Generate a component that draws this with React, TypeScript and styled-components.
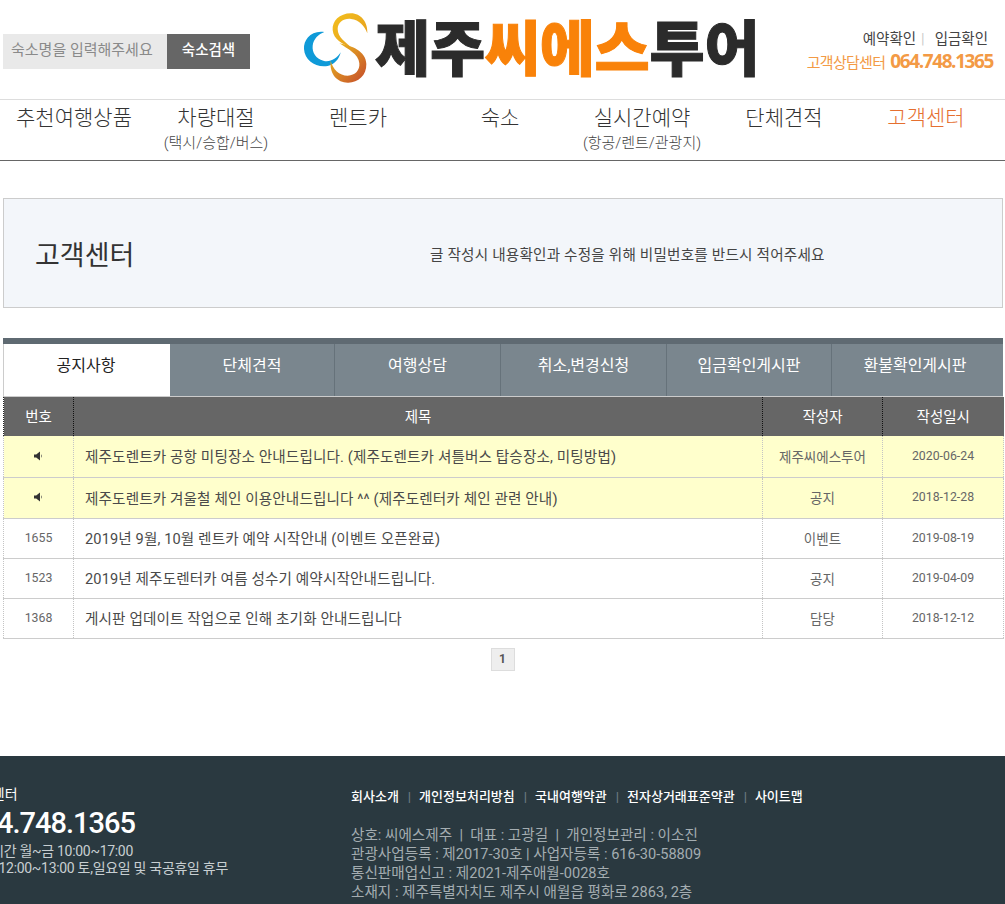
import React from "react";
import styled, { createGlobalStyle } from "styled-components";

const FONT = `Roboto, "Noto Sans CJK KR", sans-serif`;

const Global = createGlobalStyle`
  html, body { margin: 0; padding: 0; height: 904px; overflow: hidden; background: #fff; }
  body { font-family: ${FONT}; color: #333; }
  * { box-sizing: border-box; }
`;

const Page = styled.div`
  width: 1005px;
  height: 904px;
  overflow: hidden;
`;

const Header = styled.header`
  height: 100px;
  padding-left: 3px;
  display: flex;
  align-items: flex-start;
  border-bottom: 1px solid #ddd;
`;

const Search = styled.form`
  width: 247px;
  height: 35px;
  margin-top: 34px;
  display: flex;
`;

const SearchInput = styled.div`
  width: 164px;
  background: #e9e9e9;
  color: #8a8a8a;
  font-size: 15px;
  line-height: 33px;
  padding-left: 8px;
  white-space: nowrap;
`;

const SearchButton = styled.div`
  width: 83px;
  background: #666;
  color: #fff;
  font-size: 14.500px;
  font-weight: 500;
  line-height: 33px;
  text-align: center;
`;

const Logo = styled.div`
  margin-left: 46px;
  width: 462px;
  height: 90px;
  margin-top: 4px;
  display: flex;
  align-items: flex-start;
`;

const LogoMark = styled.svg`
  width: 80px;
  height: 85px;
  flex: none;
`;

const LogoText = styled.div`
  margin-left: -1px;
  margin-top: 1px;
  font-family: "Noto Sans CJK KR", sans-serif;
  font-size: 60px;
  font-weight: 900;
  line-height: 80px;
  letter-spacing: -0.3px;
  color: #2b2b2b;
  white-space: nowrap;
  -webkit-text-stroke: 1px currentColor;
`;

const LogoAccent = styled.span`
  color: #f98209;
`;

const Contact = styled.div`
  margin-left: 46px;
  width: 189px;
  padding-top: 30px;
  text-align: right;
`;

const ContactLinks = styled.div`
  font-size: 14.500px;
  line-height: 20px;
  color: #444;
  padding-right: 5px;
`;

const ContactBar = styled.span`
  color: #ccc;
  margin: 0 10px 0 5px;
`;

const Phone = styled.div`
  margin-top: 0;
  color: #f39a45;
  font-size: 15px;
  line-height: 22px;
  letter-spacing: -0.7px;
  white-space: nowrap;
`;

const PhoneNumber = styled.b`
  font-family: "Open Sans", sans-serif;
  font-size: 19px;
  font-weight: 700;
  letter-spacing: -1.4px;
  margin-left: 5px;
`;

const Nav = styled.nav`
  height: 61px;
  padding-left: 3px;
  display: grid;
  grid-template-columns: repeat(7, 142px);
  border-bottom: 1px solid #666;
`;

const NavItem = styled.a<{ $active?: boolean }>`
  text-align: center;
  padding-top: 2px;
  font-size: 21px;
  font-weight: 300;
  line-height: 32px;
  color: ${(p) => (p.$active ? "#e56f30" : "#333")};
`;

const NavSub = styled.div`
  font-size: 15px;
  line-height: 16px;
  margin-top: 1px;
  color: #444;
`;

const Banner = styled.section`
  margin: 37px 2px 0 3px;
  height: 110px;
  background: #f3f6fa;
  border: 1px solid #ccc;
  display: flex;
  align-items: center;
`;

const BannerTitle = styled.h2`
  margin: 0 0 0 31px;
  width: 395px;
  font-size: 27px;
  font-weight: 400;
  color: #333;
`;

const BannerNote = styled.p`
  margin: 0;
  font-size: 14.600px;
  letter-spacing: 0.2px;
  color: #444;
`;

const Tabs = styled.div`
  margin: 30px 2px 0 3px;
  border-top: 6px solid #5f6a72;
  height: 59px;
  display: grid;
  grid-template-columns: 167px 165px 166px 166px 165px 171px;
  background: #7a868e;
  border-bottom: 1px solid #ccc;
`;

const Tab = styled.a<{ $active?: boolean }>`
  height: 52px;
  text-align: center;
  font-size: 16px;
  line-height: 43px;
  color: ${(p) => (p.$active ? "#222" : "#fff")};
  background: ${(p) => (p.$active ? "#fff" : "#7a868e")};
  border-right: 1px solid #66727a;
  &:first-child { border-left: 1px solid #ccc; border-right: 0; padding-right: 2px; }
  &:last-child { border-right: 0; padding-right: 5px; }
`;

const Board = styled.table`
  width: 1000px;
  margin-left: 3px;
  border-collapse: collapse;
  table-layout: fixed;
`;

const HeadCell = styled.th<{ $w: number }>`
  width: ${(p) => p.$w}px;
  height: 39px;
  padding: 0 0 2px;
  background: #666;
  color: #fff;
  font-size: 14.500px;
  font-weight: 400;
  border-left: 1px dotted #111;
  &:first-child { border-left: 1px dotted #222; }
`;

const Row = styled.tr<{ $notice?: boolean; $h: number }>`
  height: ${(p) => p.$h}px;
  background: ${(p) => (p.$notice ? "#ffffcc" : "#fff")};
  border-bottom: 1px solid #ccc;
`;

const Cell = styled.td`
  padding: 0 0 1px;
  text-align: center;
  font-size: 13.500px;
  color: #666;
  border-left: 1px dotted #c4c4c4;
  &:last-child { border-right: 1px dotted #c4c4c4; }
`;

const NumCell = styled(Cell)`
  font-size: 12.300px;
`;

const TitleCell = styled(Cell)`
  text-align: left;
  padding-left: 11px;
  font-size: 14.600px;
  letter-spacing: 0.12px;
  color: #4a4a4a;
  white-space: nowrap;
`;

const Horn = styled.svg`
  width: 12px;
  height: 12px;
  display: block;
  margin: 0 auto;
`;

const Pager = styled.div`
  margin-top: 9px;
  display: flex;
  justify-content: center;
`;

const PageNum = styled.a`
  width: 24px;
  height: 23px;
  background: #eee;
  border: 1px solid #ddd;
  font-size: 12px;
  font-weight: 700;
  line-height: 21px;
  text-align: center;
  color: #555;
`;

const Footer = styled.footer`
  margin-top: 85px;
  height: 300px;
  background: #2a3940;
  display: flex;
  padding-top: 28px;
`;

const FooterLeft = styled.div`
  width: 385px;
  margin-left: -34px;
  flex: none;
  color: #c8cfd2;
`;

const FooterHead = styled.div`
  color: #fff;
  font-size: 14px;
  line-height: 20px;
`;

const FooterPhone = styled.div`
  color: #fff;
  font-size: 29px;
  font-weight: 500;
  letter-spacing: -1px;
  line-height: 36px;
  margin: 1px 0 2px;
`;

const FooterLine = styled.div<{ $pull?: boolean }>`
  font-size: 14px;
  letter-spacing: -0.3px;
  line-height: 17px;
  white-space: nowrap;
  margin-left: ${(p) => (p.$pull ? "-21px" : "0")};
`;

const FooterGap = styled(FooterHead)`
  margin-top: 18px;
`;

const FooterRight = styled.div`
  padding-top: 4px;
`;

const FooterLinks = styled.div`
  display: flex;
  align-items: center;
  color: #fff;
  font-size: 13px;
  font-weight: 500;
  line-height: 18px;
  white-space: nowrap;
`;

const FooterSep = styled.span`
  color: #6f7c82;
  margin: 0 8px 0 9px;
`;

const Company = styled.div`
  margin-top: 20px;
  color: #a4adb1;
  font-size: 14.600px;
  line-height: 19px;
  white-space: nowrap;
`;

const rows = [
  { no: null, title: "제주도렌트카 공항 미팅장소 안내드립니다. (제주도렌트카 셔틀버스 탑승장소, 미팅방법)", by: "제주씨에스투어", date: "2020-06-24", h: 41 },
  { no: null, title: "제주도렌트카 겨울철 체인 이용안내드립니다 ^^ (제주도렌터카 체인 관련 안내)", by: "공지", date: "2018-12-28", h: 41 },
  { no: "1655", title: "2019년 9월, 10월 렌트카 예약 시작안내 (이벤트 오픈완료)", by: "이벤트", date: "2019-08-19", h: 40 },
  { no: "1523", title: "2019년 제주도렌터카 여름 성수기 예약시작안내드립니다.", by: "공지", date: "2019-04-09", h: 40 },
  { no: "1368", title: "게시판 업데이트 작업으로 인해 초기화 안내드립니다", by: "담당", date: "2018-12-12", h: 40 },
];

const navItems = [
  { t: "추천여행상품" },
  { t: "차량대절", s: "(택시/승합/버스)" },
  { t: "렌트카" },
  { t: "숙소" },
  { t: "실시간예약", s: "(항공/렌트/관광지)" },
  { t: "단체견적" },
  { t: "고객센터", active: true },
];

const tabs = ["공지사항", "단체견적", "여행상담", "취소,변경신청", "입금확인게시판", "환불확인게시판"];

export default function App() {
  return (
    <Page>
      <Global />
      <Header>
        <Search>
          <SearchInput>숙소명을 입력해주세요</SearchInput>
          <SearchButton>숙소검색</SearchButton>
        </Search>
        <Logo>
          <LogoMark viewBox="0 0 240 255">
            <defs>
              <linearGradient id="gTop" x1="0" y1="0" x2="1" y2="1">
                <stop offset="0" stopColor="#f3c01d" />
                <stop offset="1" stopColor="#e49a1f" />
              </linearGradient>
              <linearGradient id="gBot" x1="0" y1="0" x2="1" y2="1">
                <stop offset="0" stopColor="#eec21d" />
                <stop offset="1" stopColor="#c4492c" />
              </linearGradient>
            </defs>
            <path fill="#0f9ad8" d="M85 84C45 78 22 108 24 135C26 170 60 192 95 186C115 182 130 165 134 145C122 165 100 176 82 170C60 164 48 145 50 125C52 105 68 90 85 84Z" />
            <path fill="url(#gTop)" d="M214 88C216 55 195 28 165 28C130 28 108 52 110 78C112 105 140 122 165 130C150 115 125 100 125 75C125 55 145 42 165 45C190 48 205 65 214 88Z" />
            <path fill="url(#gBot)" d="M130 118C165 125 210 140 211 180C212 215 185 237 155 236C125 235 100 212 104 170C110 195 130 215 155 215C178 215 192 198 190 178C188 150 155 135 130 118Z" />
          </LogoMark>
          <LogoText>제주<LogoAccent>씨에스</LogoAccent>투어</LogoText>
        </Logo>
        <Contact>
          <ContactLinks>예약확인<ContactBar>|</ContactBar>입금확인</ContactLinks>
          <Phone>고객상담센터<PhoneNumber>064.748.1365</PhoneNumber></Phone>
        </Contact>
      </Header>
      <Nav>
        {navItems.map((n) => (
          <NavItem key={n.t} $active={n.active}>
            {n.t}
            {n.s && <NavSub>{n.s}</NavSub>}
          </NavItem>
        ))}
      </Nav>
      <Banner>
        <BannerTitle>고객센터</BannerTitle>
        <BannerNote>글 작성시 내용확인과 수정을 위해 비밀번호를 반드시 적어주세요</BannerNote>
      </Banner>
      <Tabs>
        {tabs.map((t, i) => (
          <Tab key={t} $active={i === 0}>{t}</Tab>
        ))}
      </Tabs>
      <Board>
        <thead>
          <tr>
            <HeadCell $w={70}>번호</HeadCell>
            <HeadCell $w={689}>제목</HeadCell>
            <HeadCell $w={120}>작성자</HeadCell>
            <HeadCell $w={121}>작성일시</HeadCell>
          </tr>
        </thead>
        <tbody>
          {rows.map((r) => (
            <Row key={r.date} $notice={!r.no} $h={r.h}>
              <NumCell>
                {r.no ?? (
                  <Horn viewBox="0 0 12 12">
                    <path fill="#333" d="M1 4.500h2.200L7 1.500v9L3.200 7.500H1z" />
                    <path fill="#555" d="M8 4.200c1 .6 1 3 0 3.600z" />
                  </Horn>
                )}
              </NumCell>
              <TitleCell>{r.title}</TitleCell>
              <Cell>{r.by}</Cell>
              <NumCell>{r.date}</NumCell>
            </Row>
          ))}
        </tbody>
      </Board>
      <Pager>
        <PageNum>1</PageNum>
      </Pager>
      <Footer>
        <FooterLeft>
          <FooterHead>고객센터</FooterHead>
          <FooterPhone>064.748.1365</FooterPhone>
          <FooterLine>운영시간 월~금 10:00~17:00</FooterLine>
          <FooterLine $pull>점심시간 12:00~13:00 토,일요일 및 국공휴일 휴무</FooterLine>
          <FooterGap>제작</FooterGap>
        </FooterLeft>
        <FooterRight>
          <FooterLinks>
            회사소개<FooterSep>|</FooterSep>개인정보처리방침<FooterSep>|</FooterSep>국내여행약관<FooterSep>|</FooterSep>전자상거래표준약관<FooterSep>|</FooterSep>사이트맵
          </FooterLinks>
          <Company>
            상호: 씨에스제주{"\u00a0\u00a0"}|{"\u00a0\u00a0"}대표 : 고광길{"\u00a0\u00a0"}|{"\u00a0\u00a0"}개인정보관리 : 이소진<br />
            관광사업등록 : 제2017-30호 | 사업자등록 : 616-30-58809<br />
            통신판매업신고 : 제2021-제주애월-0028호<br />
            소재지 : 제주특별자치도 제주시 애월읍 평화로 2863, 2층
          </Company>
        </FooterRight>
      </Footer>
    </Page>
  );
}
